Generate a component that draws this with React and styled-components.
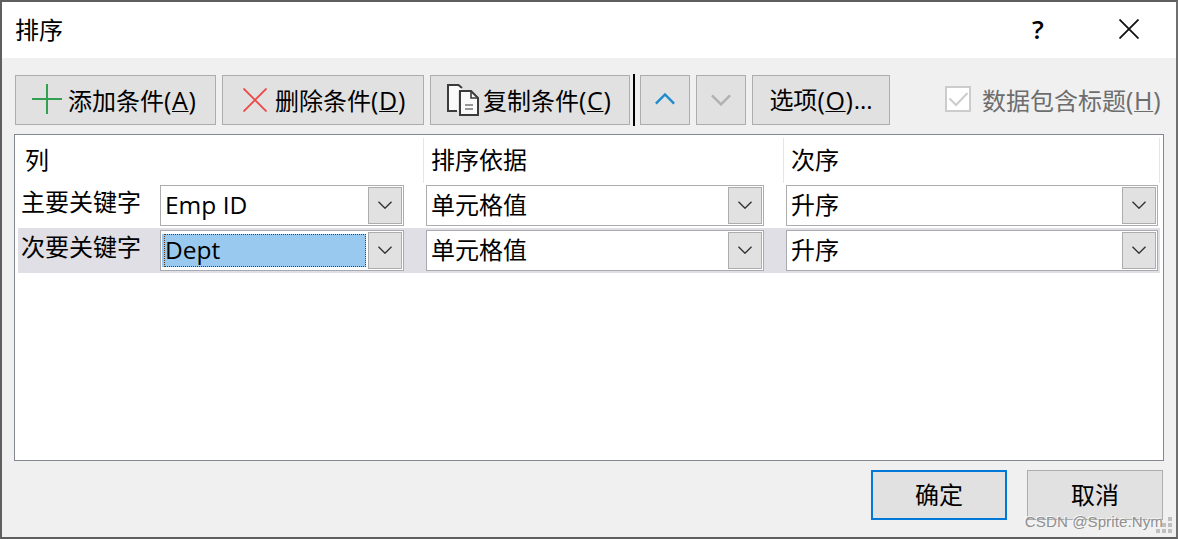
import styled, { createGlobalStyle } from "styled-components";

const GlobalStyle = createGlobalStyle`
    * {
        box-sizing: border-box;
    }

    body {
        margin: 0;
        overflow: hidden;
    }
`

const Dialog = styled.div`
    width: 1178px;
    height: 539px;
    display: flex;
    flex-direction: column;
    position: relative;
    border: 2px solid #5f5f5f;
    border-right-color: #6f6f6f;
    background-color: #f0f0f0;
    color: #000000;
    font-family: "Open Sans", "Noto Sans CJK SC", sans-serif;
    font-size: 24px;
    line-height: 34px;
    white-space: nowrap;
`

const TitleBar = styled.div`
    height: 56px;
    flex: none;
    display: flex;
    align-items: center;
    padding: 0 37px 2px 13px;
    background-color: #ffffff;
`

const Title = styled.div`
    flex: 1;
    padding-top: 2px;
`

const HelpMark = styled.div`
    width: 14px;
    margin-right: 74px;
    font-size: 26px;
    font-weight: 600;
    text-align: center;
`

const Toolbar = styled.div`
    height: 52px;
    flex: none;
    display: flex;
    align-items: center;
    margin-top: 16px;
    padding: 0 13px;
`

const Button = styled.button`
    width: ${({ $width }) => $width}px;
    height: 50px;
    flex: none;
    display: flex;
    align-items: center;
    justify-content: ${({ $start }) => ($start ? "flex-start" : "center")};
    margin: 0 6px 0 0;
    padding: 0 0 ${({ $lift }) => $lift || 0}px ${({ $start }) => $start || 0}px;
    border: ${({ $primary }) => ($primary ? "2px solid #0078d7" : "1px solid #adadad")};
    background-color: #e1e1e1;
    color: inherit;
    font: inherit;

    svg {
        flex: none;
    }
`

const Label = styled.span`
    margin-left: ${({ $gap }) => $gap || 0}px;
`

const Mnemonic = styled.span`
    font-size: 25px;
    letter-spacing: 0.7px;
`

const Key = styled.span`
    text-decoration: underline;
    text-decoration-thickness: 1px;
    text-decoration-skip-ink: none;
    text-underline-offset: 1px;
`

const Separator = styled.div`
    width: 2px;
    height: 52px;
    margin: 0 5px 0 -3px;
    background-color: #000000;
`

const HeaderOption = styled.div`
    display: flex;
    align-items: center;
    margin-left: 49px;
    color: #6d6d6d;
`

const CheckBox = styled.div`
    width: 26px;
    height: 26px;
    margin: -2px 11px 0 0;
    border: 2px solid #cccccc;
    background-color: #ffffff;

    svg {
        display: block;
    }
`

const List = styled.div`
    width: 1150px;
    height: 327px;
    flex: none;
    margin: 8px 0 0 12px;
    padding: 3px;
    border: 1px solid #828790;
    background-color: #ffffff;
`

const HeaderRow = styled.div`
    height: 45px;
    display: flex;
    width: 1142px;
`

const HeaderCell = styled.div`
    width: ${({ $width }) => $width}px;
    padding: 5px 0 0 7px;
    border-right: 1px solid #e5e5e5;
`

const Row = styled.div`
    width: 1142px;
    height: 45px;
    display: grid;
    grid-template-columns: 142px 266px 360px 372px;
    align-items: center;
    background-color: ${({ $selected }) => ($selected ? "#dfdfe5" : "transparent")};
`

const RowLabel = styled.div`
    padding: 0 0 8px 3px;
`

const Combo = styled.div`
    width: ${({ $width }) => $width}px;
    height: 41px;
    display: flex;
    padding: 1px;
    border: 1px solid ${({ $selected }) => ($selected ? "#a9a9b0" : "#adadad")};
    background-color: #ffffff;
    font-size: ${({ $latin }) => ($latin ? "24.5px" : "24px")};
`

const Value = styled.div`
    flex: 1;
    padding: 1px 0 0 3px;
`

const ActiveValue = styled.div`
    flex: 1;
    height: 33px;
    display: flex;
    margin: 2px 2px 0 0;
    padding-left: 2px;
    background-color: #99c9ef;

    span {
        flex: 1;
        border: 1px dotted #663610;
        line-height: 30px;
    }
`

const DropButton = styled.div`
    width: 34px;
    height: 37px;
    display: flex;
    align-items: center;
    justify-content: center;
    padding-bottom: 1px;
    border: 1px solid #adadad;
    background-color: #e1e1e1;
`

const Footer = styled.div`
    display: flex;
    justify-content: flex-end;
    gap: 14px;
    padding: 9px 7px 0 0;
`

const Watermark = styled.div`
    position: absolute;
    right: 13px;
    bottom: 5px;
    color: #8f8f8f;
    font-family: "Liberation Sans", sans-serif;
    font-size: 15px;
    line-height: 20px;
    letter-spacing: 0.13px;
    text-shadow: -1px -1px 0 rgba(255, 255, 255, 0.75);
`

const Grip = styled.svg`
    position: absolute;
    right: 4px;
    bottom: 4px;
`

const conditions = [
    { label: "主要关键字", column: "Emp ID", basis: "单元格值", order: "升序" },
    { label: "次要关键字", column: "Dept", basis: "单元格值", order: "升序", selected: true },
];

const PlusIcon = () => (
    <svg width="30" height="32" fill="none" stroke="#31a04f" strokeWidth="2">
        <path d="M15 0V30M0 15H30" />
    </svg>
)

const DeleteIcon = () => (
    <svg width="24" height="24" fill="none" stroke="#ed4747" strokeWidth="1.8">
        <path d="M.5 .5L23.5 23.5M23.5 .5L.5 23.5" />
    </svg>
)

const CopyIcon = () => (
    <svg width="32" height="32" fill="none" stroke="#3b3b3b" strokeWidth="2">
        <path d="M1 1H11.5L15 4.5V27H1Z" fill="#fafafa" stroke="none" />
        <path d="M10 27H1V1H11.5L15 4" />
        <path d="M12 7V31" stroke="#e1e1e1" />
        <path d="M13 7H24L31 14V31H13Z" fill="#fafafa" />
        <path d="M24 7V14H31" strokeWidth="1.6" />
        <path d="M18 21H26M18 25H26" stroke="#777777" strokeWidth="1.6" />
    </svg>
)

const Chevron = ({ color, up }) => (
    <svg width="20" height="12" fill="none" stroke={color} strokeWidth="2.4">
        <path d={up ? "M.9 10.6L10 1.5L19.1 10.6" : "M.9 1.3L10 10.4L19.1 1.3"} />
    </svg>
)

const Shortcut = ({ letter }) => (
    <Mnemonic>(<Key>{letter}</Key>)</Mnemonic>
)

const ComboBox = ({ value, width, selected, active, latin }) => (
    <Combo $width={width} $selected={selected} $latin={latin}>
        {active ? <ActiveValue><span>{value}</span></ActiveValue> : <Value>{value}</Value>}
        <DropButton>
            <svg width="14" height="8" fill="none" stroke="#333333" strokeWidth="1.4">
                <path d="M.5 .8L7 7.2L13.5 .8" />
            </svg>
        </DropButton>
    </Combo>
)

const App = () => {
    return(
        <>
            <GlobalStyle />
            <Dialog>
                <TitleBar>
                    <Title>排序</Title>
                    <HelpMark>?</HelpMark>
                    <svg width="20" height="20" fill="none" stroke="#111111" strokeWidth="1.8">
                        <path d="M.5 .5L19.5 19.5M19.5 .5L.5 19.5" />
                    </svg>
                </TitleBar>
                <Toolbar>
                    <Button $width={201} $start={16}>
                        <PlusIcon />
                        <Label $gap={6}>添加条件<Shortcut letter="A" /></Label>
                    </Button>
                    <Button $width={202} $start={20}>
                        <DeleteIcon />
                        <Label $gap={8}>删除条件<Shortcut letter="D" /></Label>
                    </Button>
                    <Button $width={200} $start={16}>
                        <CopyIcon />
                        <Label $gap={4}>复制条件<Shortcut letter="C" /></Label>
                    </Button>
                    <Separator />
                    <Button $width={50} $lift={3}><Chevron color="#1e8bcd" up /></Button>
                    <Button $width={50}><Chevron color="#b1b1b1" /></Button>
                    <Button $width={138}>选项<Shortcut letter="O" />...</Button>
                    <HeaderOption>
                        <CheckBox>
                            <svg width="22" height="22" fill="none" stroke="#cccccc" strokeWidth="2">
                                <path d="M2.5 10.5L9 17L20.5 5" />
                            </svg>
                        </CheckBox>
                        <span>数据包含标题<Shortcut letter="H" /></span>
                    </HeaderOption>
                </Toolbar>
                <List>
                    <HeaderRow>
                        <HeaderCell $width={406}>列</HeaderCell>
                        <HeaderCell $width={360}>排序依据</HeaderCell>
                        <HeaderCell $width={376}>次序</HeaderCell>
                    </HeaderRow>
                    {conditions.map((item) => (
                        <Row key={item.label} $selected={item.selected}>
                            <RowLabel>{item.label}</RowLabel>
                            <ComboBox value={item.column} width={244} selected={item.selected} active={item.selected} latin />
                            <ComboBox value={item.basis} width={338} selected={item.selected} />
                            <ComboBox value={item.order} width={372} selected={item.selected} />
                        </Row>
                    ))}
                </List>
                <Footer>
                    <Button $width={136} $primary>确定</Button>
                    <Button $width={136}>取消</Button>
                </Footer>
                <Grip width="16" height="16" fill="#bfbfbf">
                    <path d="M12 0h4v4h-4zM6 6h4v4h-4zM12 6h4v4h-4zM0 12h4v4h-4zM6 12h4v4h-4zM12 12h4v4h-4z" />
                </Grip>
                <Watermark>CSDN @Sprite.Nym</Watermark>
            </Dialog>
        </>
    )
}

export default App;
